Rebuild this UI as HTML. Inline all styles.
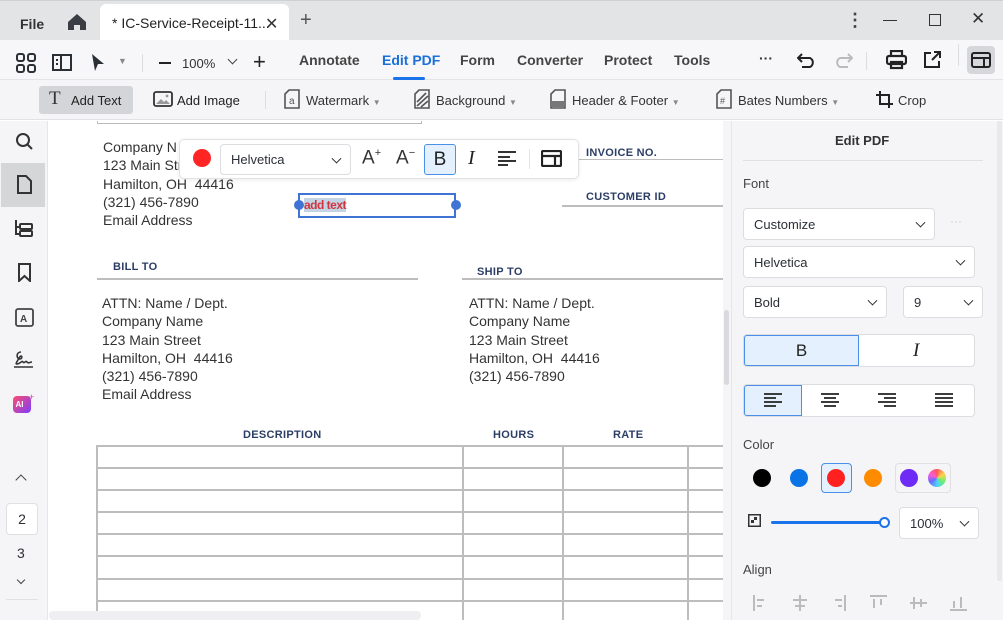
<!DOCTYPE html>
<html><head><meta charset="utf-8"><style>
*{box-sizing:border-box;margin:0;padding:0}
body{width:1003px;height:620px;overflow:hidden;font-family:"Liberation Sans",sans-serif;color:#2b2f36;background:#fff;position:relative}
.a{position:absolute}
.t{font-size:13px}
svg{position:absolute}
.doc{font-size:14px;color:#333;line-height:18.3px}
.hd{font-size:11px;font-weight:bold;color:#2c3e66;letter-spacing:.3px}
.sel{position:absolute;background:#fff;border:1px solid #dcdde0;border-radius:4px;font-size:13px;padding-left:10px;display:flex;align-items:center}
.chev{position:absolute;right:10px;top:50%;width:7px;height:7px;border-right:1.5px solid #333;border-bottom:1.5px solid #333;transform:translateY(-70%) rotate(45deg)}
.dot{position:absolute;width:18px;height:18px;border-radius:50%}
.hl{position:absolute;height:2px;background:#bdbdbd}
.vl{position:absolute;width:2px;background:#bdbdbd}
</style></head><body>
<!-- title bar -->
<div class="a" style="left:0;top:0;width:1003px;height:40px;background:#e3e4e6;border-top:1px solid #cfd0d2"></div>
<div class="a" style="left:20px;top:16px;font-size:14px;font-weight:bold;color:#333">File</div>
<svg style="left:67px;top:13px" width="20" height="18" viewBox="0 0 20 18"><path d="M10 1 L19 9 V17 H13 V12 H7 V17 H1 V9 Z" fill="#3a3d44"/></svg>
<div class="a" style="left:100px;top:4px;width:189px;height:36px;background:#fff;border-radius:6px 6px 0 0"></div>
<div class="a" style="left:112px;top:15px;font-size:14px;color:#222">* IC-Service-Receipt-11...</div>
<div class="a" style="left:265px;top:14px;font-size:16px;color:#333">✕</div>
<div class="a" style="left:300px;top:9px;font-size:20px;color:#555">+</div>
<div class="a" style="left:846px;top:10px;font-size:18px;color:#444;font-weight:bold">⋮</div>
<div class="a" style="left:883px;top:20px;width:14px;height:1px;background:#333"></div>
<div class="a" style="left:929px;top:14px;width:12px;height:12px;border:1px solid #333"></div>
<div class="a" style="left:971px;top:9px;font-size:17px;color:#333">✕</div>
<!-- toolbar -->
<div class="a" style="left:0;top:40px;width:1003px;height:40px;background:#f7f7f9;border-bottom:1px solid #e4e4e6"></div>
<svg style="left:16px;top:53px" width="20" height="20" viewBox="0 0 20 20" fill="none" stroke="#2b2f36" stroke-width="2"><rect x="1" y="1" width="7" height="7" rx="2"/><rect x="12" y="1" width="7" height="7" rx="2"/><rect x="1" y="12" width="7" height="7" rx="2"/><rect x="12" y="12" width="7" height="7" rx="2"/></svg>
<svg style="left:52px;top:54px" width="20" height="17" viewBox="0 0 20 17" fill="none" stroke="#2b2f36" stroke-width="2"><rect x="1" y="1" width="18" height="15"/><path d="M9 1V16M4 6h2M4 10h2"/></svg>
<svg style="left:91px;top:53px" width="14" height="19" viewBox="0 0 14 19"><path d="M1 1 L13 11 H7 L4 18 Z" fill="#2b2f36"/></svg>
<div class="a" style="left:118px;top:56px;font-size:9px;color:#888">▼</div>
<div class="a" style="left:142px;top:54px;width:1px;height:18px;background:#ddd"></div>
<div class="a" style="left:159px;top:62px;width:12px;height:2px;background:#222"></div>
<div class="a" style="left:182px;top:56px;font-size:13px;color:#333">100%</div>
<div class="a" style="left:229px;top:56px;width:7px;height:7px;border-right:1.5px solid #444;border-bottom:1.5px solid #444;transform:rotate(45deg)"></div>
<div class="a" style="left:253px;top:49px;font-size:22px;color:#222">+</div>
<div class="a t" style="left:299px;top:52px;font-size:14px;font-weight:bold;color:#444">Annotate</div>
<div class="a t" style="left:382px;top:52px;font-size:14px;font-weight:bold;color:#1a6fd8">Edit PDF</div>
<div class="a" style="left:393px;top:77px;width:32px;height:3px;background:#1a73e8;border-radius:2px"></div>
<div class="a t" style="left:460px;top:52px;font-size:14px;font-weight:bold;color:#444">Form</div>
<div class="a t" style="left:517px;top:52px;font-size:14px;font-weight:bold;color:#444">Converter</div>
<div class="a t" style="left:604px;top:52px;font-size:14px;font-weight:bold;color:#444">Protect</div>
<div class="a t" style="left:674px;top:52px;font-size:14px;font-weight:bold;color:#444">Tools</div>
<div class="a" style="left:759px;top:50px;font-size:14px;font-weight:bold;color:#333">···</div>
<svg style="left:797px;top:52px" width="20" height="16" viewBox="0 0 20 16" fill="none" stroke="#222" stroke-width="2"><path d="M5 2 L1 6 L5 10 M1 6 H13 a5 5 0 0 1 0 9 H5"/></svg>
<svg style="left:833px;top:52px" width="20" height="16" viewBox="0 0 20 16" fill="none" stroke="#bbb" stroke-width="2"><path d="M15 2 L19 6 L15 10 M19 6 H7 a5 5 0 0 0 0 9 H15"/></svg>
<div class="a" style="left:866px;top:52px;width:1px;height:18px;background:#ddd"></div>
<svg style="left:886px;top:50px" width="21" height="20" viewBox="0 0 21 20" fill="none" stroke="#222" stroke-width="2.2"><path d="M5 6V1h11v5"/><rect x="1" y="6" width="19" height="8" rx="2"/><rect x="5" y="12" width="11" height="6"/></svg>
<svg style="left:923px;top:51px" width="18" height="18" viewBox="0 0 18 18" fill="none" stroke="#222" stroke-width="2"><path d="M8 2H2v14h14v-6M11 1h6v6M17 1l-8 8"/></svg>
<div class="a" style="left:958px;top:44px;width:1px;height:22px;background:#ddd"></div>
<div class="a" style="left:967px;top:46px;width:28px;height:28px;background:#d6d7da;border-radius:4px"></div>
<svg style="left:971px;top:52px" width="20" height="16" viewBox="0 0 20 16" fill="none" stroke="#222" stroke-width="2"><rect x="1" y="1" width="18" height="14" rx="2"/><path d="M1 6H19M13 6V15"/></svg>
<!-- second toolbar -->
<div class="a" style="left:0;top:80px;width:1003px;height:40px;background:#f5f5f7;border-bottom:1px solid #e2e2e4"></div>
<div class="a" style="left:39px;top:86px;width:94px;height:28px;background:#d4d5d8;border-radius:3px"></div>
<div class="a" style="left:49px;top:88px;font-size:19px;font-family:'Liberation Serif',serif;color:#333">T</div>
<div class="a t" style="left:71px;top:93px;color:#222">Add Text</div>
<svg style="left:153px;top:91px" width="20" height="16" viewBox="0 0 20 16" fill="none" stroke="#333" stroke-width="1.8"><rect x="1" y="1" width="18" height="14" rx="2"/><path d="M3 13l5-5 3 3 2-2 4 4" fill="#999" stroke="none"/><circle cx="14" cy="5" r="1.4" fill="#999" stroke="none"/></svg>
<div class="a t" style="left:177px;top:93px;color:#222">Add Image</div>
<div class="a" style="left:265px;top:91px;width:1px;height:18px;background:#ddd"></div>
<svg style="left:284px;top:89px" width="16" height="20" viewBox="0 0 16 20" fill="none" stroke="#555" stroke-width="1.6"><path d="M5 1H15V19H1V5Z"/><text x="5" y="15" font-size="10" fill="#555" stroke="none" font-family="Liberation Sans">a</text></svg>
<div class="a t" style="left:306px;top:93px;color:#333">Watermark <span style="font-size:8px;color:#888">▼</span></div>
<svg style="left:414px;top:89px" width="16" height="20" viewBox="0 0 16 20" fill="none" stroke="#555" stroke-width="1.6"><path d="M5 1H15V19H1V5Z"/><path d="M3 13L12 4M3 17L14 7M7 18L14 12"/></svg>
<div class="a t" style="left:436px;top:93px;color:#333">Background <span style="font-size:8px;color:#888">▼</span></div>
<svg style="left:550px;top:89px" width="16" height="20" viewBox="0 0 16 20" fill="none" stroke="#555" stroke-width="1.6"><path d="M5 1H15V19H1V5Z"/><rect x="2" y="12" width="12" height="6" fill="#777" stroke="none"/></svg>
<div class="a t" style="left:572px;top:93px;color:#333">Header &amp; Footer <span style="font-size:8px;color:#888">▼</span></div>
<svg style="left:716px;top:89px" width="16" height="20" viewBox="0 0 16 20" fill="none" stroke="#555" stroke-width="1.6"><path d="M5 1H15V19H1V5Z"/><text x="4" y="15" font-size="9" fill="#555" stroke="none" font-family="Liberation Sans">#</text></svg>
<div class="a t" style="left:738px;top:93px;color:#333">Bates Numbers <span style="font-size:8px;color:#888">▼</span></div>
<svg style="left:875px;top:90px" width="19" height="19" viewBox="0 0 19 19" fill="none" stroke="#222" stroke-width="2"><path d="M5 1V14H18M1 5H14V18"/></svg>
<div class="a t" style="left:898px;top:93px;color:#333">Crop</div>
<!-- left sidebar -->
<div class="a" style="left:0;top:121px;width:48px;height:499px;background:#f5f5f7;border-right:1px solid #e6e6e8"></div>
<svg style="left:15px;top:132px" width="19" height="19" viewBox="0 0 19 19" fill="none" stroke="#333" stroke-width="2"><circle cx="8" cy="8" r="6"/><path d="M12.5 12.5L17 17"/></svg>
<div class="a" style="left:1px;top:163px;width:44px;height:44px;background:#d5d6d8"></div>
<svg style="left:17px;top:175px" width="15" height="19" viewBox="0 0 15 19" fill="none" stroke="#333" stroke-width="2"><path d="M1 1H9L14 6V18H1Z"/></svg>
<svg style="left:14px;top:219px" width="19" height="19" viewBox="0 0 19 19" fill="none" stroke="#333" stroke-width="2"><path d="M2 1V15H6M2 8H6"/><rect x="6" y="5" width="12" height="5" rx="1"/><rect x="6" y="12" width="12" height="5" rx="1"/></svg>
<svg style="left:18px;top:263px" width="13" height="19" viewBox="0 0 13 19" fill="none" stroke="#333" stroke-width="2"><path d="M1 1H12V18L6.5 13L1 18Z"/></svg>
<svg style="left:15px;top:308px" width="19" height="19" viewBox="0 0 19 19" fill="none" stroke="#444" stroke-width="1.8"><rect x="1" y="1" width="17" height="17" rx="2"/><text x="5" y="14" font-size="10" font-weight="bold" fill="#444" stroke="none" font-family="Liberation Sans">A</text></svg>
<svg style="left:13px;top:350px" width="21" height="20" viewBox="0 0 21 20" fill="none" stroke="#333" stroke-width="1.6"><path d="M8 2C3 2 3 9 7 9 C10 9 9 3 6 8 C4 12 2 14 4 14 C7 14 9 10 10 12 C11 14 13 10 14 12 C15 14 17 12 19 12M1 17H20"/></svg>
<div class="a" style="left:13px;top:396px;width:18px;height:17px;border-radius:4px;background:linear-gradient(135deg,#ff4d6d,#7b3cff)"></div>
<div class="a" style="left:15.5px;top:400px;font-size:8px;font-weight:bold;color:#fff">AI</div>
<div class="a" style="left:29px;top:392px;font-size:9px;color:#e23ea0">+</div>
<div class="a" style="left:17px;top:476px;width:8px;height:8px;border-left:1.6px solid #444;border-top:1.6px solid #444;transform:rotate(45deg)"></div>
<div class="a" style="left:6px;top:503px;width:32px;height:32px;background:#fff;border:1px solid #e0e0e2;border-radius:4px;font-size:14px;text-align:center;line-height:30px">2</div>
<div class="a" style="left:17px;top:545px;font-size:14px">3</div>
<div class="a" style="left:18px;top:577px;width:6px;height:6px;border-right:1.5px solid #444;border-bottom:1.5px solid #444;transform:rotate(45deg)"></div>
<div class="a" style="left:6px;top:599px;width:32px;height:1px;background:#e0e0e2"></div>
<!-- document -->
<div class="a" style="left:49px;top:121px;width:674px;height:499px;background:#fff;overflow:hidden">
  <div class="a" style="left:48px;top:0;width:325px;height:3px;border:1px solid #bbb;border-top:none"></div>
  <div class="a doc" style="left:54px;top:17px">Company N<br>123 Main Street<br>Hamilton, OH&nbsp; 44416<br>(321) 456-7890<br>Email Address</div>
  <div class="a hd" style="left:537px;top:26px">INVOICE NO.</div>
  <div class="hl" style="left:513px;top:38px;width:170px;height:1px"></div>
  <div class="a hd" style="left:537px;top:70px">CUSTOMER ID</div>
  <div class="hl" style="left:513px;top:84px;width:170px"></div>
  <div class="a hd" style="left:64px;top:140px">BILL TO</div>
  <div class="hl" style="left:48px;top:157px;width:321px"></div>
  <div class="a hd" style="left:428px;top:145px">SHIP TO</div>
  <div class="hl" style="left:413px;top:157px;width:270px"></div>
  <div class="a doc" style="left:53px;top:173px">ATTN: Name / Dept.<br>Company Name<br>123 Main Street<br>Hamilton, OH&nbsp; 44416<br>(321) 456-7890<br>Email Address</div>
  <div class="a doc" style="left:420px;top:173px">ATTN: Name / Dept.<br>Company Name<br>123 Main Street<br>Hamilton, OH&nbsp; 44416<br>(321) 456-7890</div>
  <div class="a hd" style="left:194px;top:308px">DESCRIPTION</div>
  <div class="a hd" style="left:444px;top:308px">HOURS</div>
  <div class="a hd" style="left:564px;top:308px">RATE</div>
  <div class="hl" style="left:47px;top:324px;width:640px"></div>
  <div class="hl" style="left:47px;top:346px;width:640px"></div>
  <div class="hl" style="left:47px;top:368px;width:640px"></div>
  <div class="hl" style="left:47px;top:390px;width:640px"></div>
  <div class="hl" style="left:47px;top:412px;width:640px"></div>
  <div class="hl" style="left:47px;top:434px;width:640px"></div>
  <div class="hl" style="left:47px;top:457px;width:640px"></div>
  <div class="hl" style="left:47px;top:479px;width:640px"></div>
  <div class="vl" style="left:47px;top:324px;height:180px"></div>
  <div class="vl" style="left:413px;top:324px;height:180px"></div>
  <div class="vl" style="left:513px;top:324px;height:180px"></div>
  <div class="vl" style="left:638px;top:324px;height:180px"></div>
  <!-- selection box -->
  <div class="a" style="left:249px;top:72px;width:158px;height:25px;border:2px solid #3f74d4"></div>
  <div class="a" style="left:245px;top:79px;width:10px;height:10px;border-radius:50%;background:#3f74d4"></div>
  <div class="a" style="left:402px;top:79px;width:10px;height:10px;border-radius:50%;background:#3f74d4"></div>
  <div class="a" style="left:255px;top:77px;font-size:12px;font-weight:bold;color:#d0343e;background:#c5d4e4;letter-spacing:-.5px;line-height:14px">add text</div>
  <div class="a" style="left:0;top:490px;width:372px;height:9px;background:#efeff1;border-radius:4px"></div>
</div>
<div class="a" style="left:723px;top:121px;width:8px;height:499px;background:#f5f5f7"></div>
<div class="a" style="left:724px;top:310px;width:5px;height:75px;background:#dadade;border-radius:3px"></div>
<!-- floating toolbar -->
<div class="a" style="left:179px;top:139px;width:400px;height:40px;background:#fff;border:1px solid #e2e2e4;border-radius:5px;box-shadow:0 1px 4px rgba(0,0,0,.08)"></div>
<div class="dot" style="left:193px;top:149px;background:#ff2525"></div>
<div class="sel" style="left:220px;top:144px;width:131px;height:31px;font-size:13px">Helvetica<span class="chev"></span></div>
<div class="a" style="left:362px;top:147px;font-size:19px;color:#333">A<sup style="font-size:11px">+</sup></div>
<div class="a" style="left:396px;top:147px;font-size:19px;color:#333">A<sup style="font-size:11px">−</sup></div>
<div class="a" style="left:424px;top:144px;width:32px;height:31px;background:#e4f0fd;border:1px solid #4a90e8;border-radius:3px;text-align:center;font-size:19px;line-height:29px;color:#222">B</div>
<div class="a" style="left:468px;top:147px;font-size:20px;font-family:'Liberation Serif',serif;font-style:italic;color:#222">I</div>
<svg style="left:498px;top:150px" width="19" height="16" viewBox="0 0 19 16" stroke="#333" stroke-width="2"><path d="M0 2H18M0 7H12M0 11H18M0 15H10"/></svg>
<div class="a" style="left:529px;top:149px;width:1px;height:20px;background:#e4e4e6"></div>
<svg style="left:541px;top:150px" width="21" height="17" viewBox="0 0 21 17" fill="none" stroke="#222" stroke-width="2.2"><rect x="1" y="1" width="19" height="15" rx="1"/><path d="M1 6H20M14 6V16"/></svg>
<!-- right panel -->
<div class="a" style="left:731px;top:121px;width:272px;height:499px;background:#f5f5f7;border-left:1px solid #e6e6e8"></div>
<div class="a" style="left:997px;top:121px;width:5px;height:460px;background:#e9e9eb;border-radius:2px"></div>
<div class="a" style="left:835px;top:133px;font-size:13px;font-weight:bold;color:#333">Edit PDF</div>
<div class="a" style="left:743px;top:160px;width:240px;height:1px;background:#e0e0e2"></div>
<div class="a" style="left:743px;top:176px;font-size:13px;color:#444">Font</div>
<div class="sel" style="left:743px;top:208px;width:192px;height:32px">Customize<span class="chev"></span></div>
<div class="a" style="left:950px;top:214px;font-size:12px;color:#ccc">···</div>
<div class="sel" style="left:743px;top:246px;width:232px;height:32px">Helvetica<span class="chev"></span></div>
<div class="sel" style="left:743px;top:286px;width:144px;height:32px">Bold<span class="chev"></span></div>
<div class="sel" style="left:903px;top:286px;width:80px;height:32px">9<span class="chev"></span></div>
<div class="a" style="left:743px;top:334px;width:232px;height:33px;background:#fff;border:1px solid #dcdde0;border-radius:4px"></div>
<div class="a" style="left:744px;top:335px;width:115px;height:31px;background:#e4f0fd;border:1px solid #4a90e8;border-radius:3px 0 0 3px;text-align:center;font-size:17px;line-height:30px;color:#222">B</div>
<div class="a" style="left:913px;top:340px;font-size:19px;font-family:'Liberation Serif',serif;font-style:italic;color:#222">I</div>
<div class="a" style="left:743px;top:384px;width:232px;height:33px;background:#fff;border:1px solid #dcdde0;border-radius:4px"></div>
<div class="a" style="left:744px;top:385px;width:58px;height:31px;background:#e4f0fd;border:1px solid #4a90e8;border-radius:3px 0 0 3px"></div>
<svg style="left:764px;top:393px" width="19" height="15" viewBox="0 0 19 15" stroke="#222" stroke-width="1.8"><path d="M0 1H18M0 5H12M0 9H18M0 13H12"/></svg>
<svg style="left:821px;top:393px" width="19" height="15" viewBox="0 0 19 15" stroke="#222" stroke-width="1.8"><path d="M0 1H18M3 5H15M0 9H18M3 13H15"/></svg>
<svg style="left:878px;top:393px" width="19" height="15" viewBox="0 0 19 15" stroke="#222" stroke-width="1.8"><path d="M0 1H18M6 5H18M0 9H18M6 13H18"/></svg>
<svg style="left:935px;top:393px" width="19" height="15" viewBox="0 0 19 15" stroke="#222" stroke-width="1.8"><path d="M0 1H18M0 5H18M0 9H18M0 13H18"/></svg>
<div class="a" style="left:743px;top:437px;font-size:13px;color:#444">Color</div>
<div class="dot" style="left:753px;top:469px;background:#000"></div>
<div class="dot" style="left:790px;top:469px;background:#0a74e6"></div>
<div class="a" style="left:821px;top:463px;width:31px;height:30px;background:#e4f0fd;border:1px solid #4a90e8;border-radius:4px"></div>
<div class="dot" style="left:827px;top:469px;background:#ff2020"></div>
<div class="dot" style="left:864px;top:469px;background:#ff8c00"></div>
<div class="a" style="left:895px;top:463px;width:56px;height:30px;border:1px solid #e0e0e2;border-radius:4px"></div>
<div class="dot" style="left:900px;top:469px;background:#6d2bf5"></div>
<div class="dot" style="left:928px;top:469px;background:conic-gradient(#ff5a5a,#ffd24d,#6cf06c,#4dd0ff,#6a6aff,#ff5ad8,#ff5a5a)"></div>
<svg style="left:748px;top:514px" width="13" height="13" viewBox="0 0 13 13"><rect x=".75" y=".75" width="11.5" height="11.5" fill="none" stroke="#333" stroke-width="1.5"/><rect x="3" y="6" width="3" height="3" fill="#333"/><rect x="6" y="3" width="3" height="3" fill="#333"/></svg>
<div class="a" style="left:771px;top:521px;width:113px;height:3px;background:#1a73e8;border-radius:2px"></div>
<div class="a" style="left:879px;top:517px;width:11px;height:11px;border-radius:50%;background:#fff;border:2.5px solid #1a73e8"></div>
<div class="sel" style="left:899px;top:507px;width:80px;height:32px">100%<span class="chev"></span></div>
<div class="a" style="left:743px;top:562px;font-size:13px;color:#444">Align</div>
<svg style="left:752px;top:594px" width="215" height="18" viewBox="0 0 215 18" stroke="#bbb" stroke-width="2" fill="none"><path d="M2 1V17M5 6H12M5 12H10"/><path d="M48 1V17M41 6H55M43 12H53"/><path d="M93 1V17M83 6H90M86 12H90"/><path d="M118 2H135M122 5V14M129 5V11"/><path d="M158 9H175M162 3V15M169 5V13"/><path d="M198 16H215M202 7V14M209 3V14"/></svg>
</body></html>
